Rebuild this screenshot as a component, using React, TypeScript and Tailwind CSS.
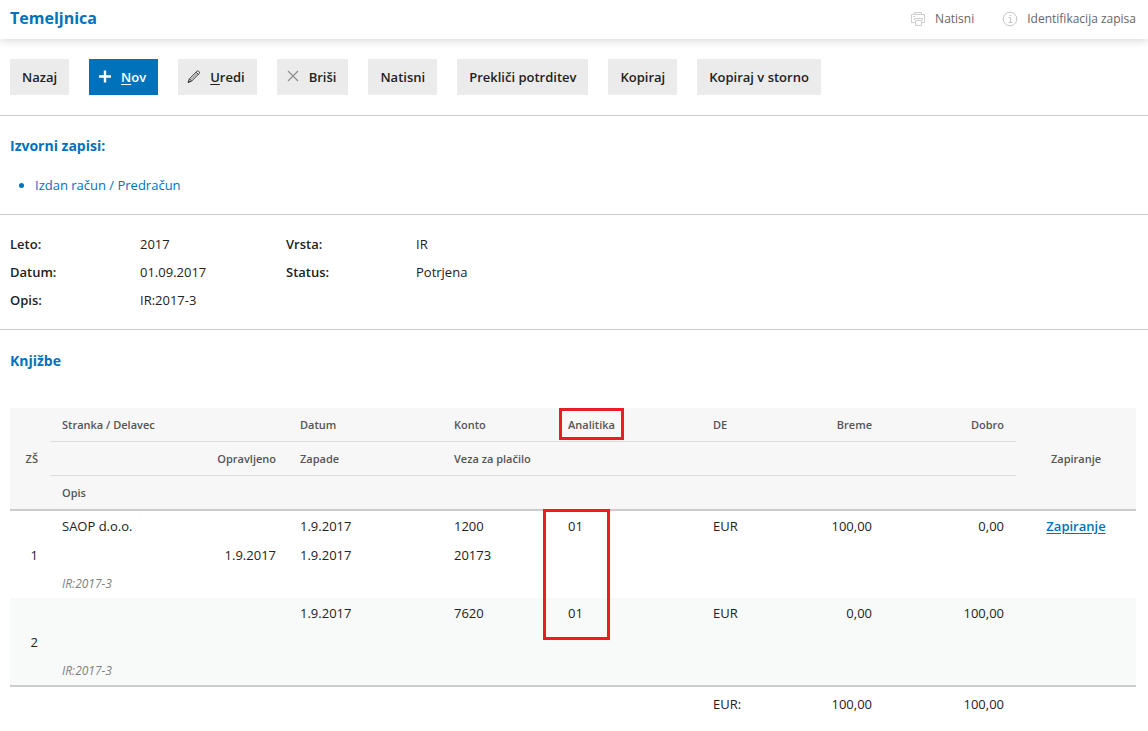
import type { ReactNode } from "react";

interface Entry {
    no: number;
    partner: string;
    date: string;
    account: string;
    analytics: string;
    currency: string;
    debit: string;
    credit: string;
    served: string;
    due: string;
    reference: string;
    note: string;
    closable: boolean;
}

const entries: Entry[] = [
    {
        no: 1, partner: "SAOP d.o.o.", date: "1.9.2017", account: "1200", analytics: "01", currency: "EUR",
        debit: "100,00", credit: "0,00", served: "1.9.2017", due: "1.9.2017", reference: "20173",
        note: "IR:2017-3", closable: true,
    },
    {
        no: 2, partner: "", date: "1.9.2017", account: "7620", analytics: "01", currency: "EUR",
        debit: "0,00", credit: "100,00", served: "", due: "", reference: "",
        note: "IR:2017-3", closable: false,
    },
];

function PrintIcon() {
    return (
        <svg viewBox="0 0 16 16" className="w-4 h-4" fill="none" stroke="#cdcdcd" aria-hidden="true">
            <path d="M4.5 3.5v-2h7v2M4.5 11.5h-3v-8h13v8h-3M3 5.5h2" />
            <path d="M4.5 9V7.5h8V9M5.5 9.5h6v5h-6z" />
        </svg>
    );
}

function InfoIcon() {
    return (
        <svg viewBox="0 0 16 16" className="w-4 h-4" fill="none" stroke="#c4c4c4" aria-hidden="true">
            <circle cx="8" cy="8" r="6.8" />
            <path d="M6.5 6.5h2v5M6.5 11.5h4M7.5 4.5H9" />
        </svg>
    );
}

function PlusIcon() {
    return (
        <svg viewBox="0 0 14 14" className="w-3.5 h-3.5" fill="none" stroke="currentColor" strokeWidth="2.4" aria-hidden="true">
            <path d="M7 0.5v12M1 6.5h12" />
        </svg>
    );
}

function PencilIcon() {
    return (
        <svg viewBox="0 0 14 14" className="w-3.5 h-3.5" fill="none" stroke="#333" aria-hidden="true">
            <path d="M1.2 12.3l1.2-3.5 7.6-7.5c.5-.5 1.2-.5 1.7 0l.5.5c.5.5.5 1.2 0 1.7l-7.6 7.6zM2.4 8.8l2.2 2.3M9 2.2l2.3 2.3" />
            <path d="M3.8 9.7l6-6" strokeWidth="0.6" />
            <path d="M1.2 12.3l.4-1.3.9.9z" fill="#333" />
        </svg>
    );
}

function CrossIcon() {
    return (
        <svg viewBox="0 0 14 14" className="w-3.5 h-3.5" fill="none" stroke="#8c8c8c" strokeWidth="1.1" aria-hidden="true">
            <path d="M2 1l10 10M12 1L2 11" />
        </svg>
    );
}

function ToolButton({ icon, primary, children }: { icon?: ReactNode; primary?: boolean; children: ReactNode }) {
    const color = primary ? "bg-[#0072bc] text-white" : "bg-[#ebebeb] text-[#222]";
    const padding = icon ? "pl-[9px] pr-3" : "px-3";
    return (
        <button type="button" className={`flex items-center gap-[9px] h-9 font-semibold ${padding} ${color}`}>
            {icon}
            <span>{children}</span>
        </button>
    );
}

function Field({ label, value }: { label: string; value: string }) {
    return (
        <div className="flex h-7 items-center">
            <dt className="w-[130px] font-semibold">{label}</dt>
            <dd>{value}</dd>
        </div>
    );
}

export default function App() {
    return (
        <div className="min-h-screen bg-white font-['Open_Sans',sans-serif] text-[13px] leading-5 text-[#222]">
            <header className="flex h-[39px] items-center justify-between pb-0.5 pl-2.5 pr-3 shadow-[0_2px_8px_rgba(0,0,0,0.15)]">
                <h1 className="pb-0.5 text-base font-bold leading-5 text-[#0072bc]">Temeljnica</h1>
                <div className="flex gap-7 text-xs text-[#666]">
                    <button type="button" className="flex items-center gap-[9px]">
                        <PrintIcon />
                        Natisni
                    </button>
                    <button type="button" className="flex items-center gap-[9px]">
                        <InfoIcon />
                        Identifikacija zapisa
                    </button>
                </div>
            </header>

            <div className="flex flex-wrap gap-5 border-b border-[#ccc] px-2.5 py-5">
                <ToolButton>Nazaj</ToolButton>
                <ToolButton primary icon={<PlusIcon />}><u className="underline-offset-2">N</u>ov</ToolButton>
                <ToolButton icon={<PencilIcon />}><u className="underline-offset-2">U</u>redi</ToolButton>
                <ToolButton icon={<CrossIcon />}>Briši</ToolButton>
                <ToolButton>Natisni</ToolButton>
                <ToolButton>Prekliči potrditev</ToolButton>
                <ToolButton>Kopiraj</ToolButton>
                <ToolButton>Kopiraj v storno</ToolButton>
            </div>

            <section className="border-b border-[#ccc] px-2.5 pt-5 pb-[19px] text-[#0072bc]">
                <h2 className="text-sm font-bold">Izvorni zapisi:</h2>
                <ul className="mt-[19px] list-disc pl-[25px]">
                    <li><a href="#racun">Izdan račun / Predračun</a></li>
                </ul>
            </section>

            <dl className="flex border-b border-[#ccc] px-2.5 py-[15px]">
                <div className="w-[276px]">
                    <Field label="Leto:" value="2017" />
                    <Field label="Datum:" value="01.09.2017" />
                    <Field label="Opis:" value="IR:2017-3" />
                </div>
                <div>
                    <Field label="Vrsta:" value="IR" />
                    <Field label="Status:" value="Potrjena" />
                </div>
            </dl>

            <section className="pl-2.5 pr-3 pt-[21px]">
                <h2 className="text-sm font-bold text-[#0072bc]">Knjižbe</h2>
                <table className="mt-[37px] w-full table-fixed border-separate border-spacing-0 text-left">
                    <colgroup>
                        <col className="w-[40px]" />
                        <col className="w-[238px]" />
                        <col className="w-[154px]" />
                        <col className="w-[114px]" />
                        <col className="w-[145px]" />
                        <col className="w-[73px]" />
                        <col className="w-[110px]" />
                        <col className="w-[132px]" />
                        <col className="w-[120px]" />
                    </colgroup>
                    <thead className="bg-[#f7f7f7] text-[11px] text-[#555] [&_th]:px-3 [&_th]:font-semibold">
                        <tr className="h-[34px]">
                            <th rowSpan={3} className="border-b-2 border-[#ccc] text-right">ZŠ</th>
                            <th className="border-b border-[#ddd]">Stranka / Delavec</th>
                            <th className="border-b border-[#ddd]">Datum</th>
                            <th className="border-b border-[#ddd]">Konto</th>
                            <th className="relative border-b border-[#ddd]">
                                Analitika
                                <span className="absolute top-0 left-[3px] h-8 w-[65px] border-3 border-[#ed1c24]" />
                            </th>
                            <th className="border-b border-[#ddd]">DE</th>
                            <th className="border-b border-[#ddd] text-right">Breme</th>
                            <th className="border-b border-[#ddd] text-right">Dobro</th>
                            <th rowSpan={3} className="border-b-2 border-[#ccc] text-center">Zapiranje</th>
                        </tr>
                        <tr className="h-[34px]">
                            <th className="border-b border-[#ddd] text-right">Opravljeno</th>
                            <th className="border-b border-[#ddd]">Zapade</th>
                            <th colSpan={5} className="border-b border-[#ddd]">Veza za plačilo</th>
                        </tr>
                        <tr className="h-[35px]">
                            <th colSpan={7} className="border-b-2 border-[#ccc]">Opis</th>
                        </tr>
                    </thead>
                    {entries.map((e, i) => (
                        <tbody key={e.no} className="even:bg-[#f8faf9] [&_td]:px-3">
                            <tr className="h-[30px]">
                                <td rowSpan={3} className="text-right">{e.no}</td>
                                <td>{e.partner}</td>
                                <td>{e.date}</td>
                                <td>{e.account}</td>
                                <td className="relative">
                                    {e.analytics}
                                    {i === 0 && (
                                        <span className="absolute -top-0.5 -left-[13px] z-10 h-[131px] w-[67px] border-3 border-[#ed1c24]" />
                                    )}
                                </td>
                                <td>{e.currency}</td>
                                <td className="text-right">{e.debit}</td>
                                <td className="text-right">{e.credit}</td>
                                <td className="text-center">
                                    {e.closable && <a href="#zapiranje" className="font-semibold text-[#0072bc] underline underline-offset-2">Zapiranje</a>}
                                </td>
                            </tr>
                            <tr className="h-7">
                                <td className="text-right">{e.served}</td>
                                <td>{e.due}</td>
                                <td colSpan={5}>{e.reference}</td>
                                <td />
                            </tr>
                            <tr className="h-[29px] text-xs text-[#808080] italic">
                                <td colSpan={7}>{e.note}</td>
                                <td />
                            </tr>
                        </tbody>
                    ))}
                    <tfoot className="[&_td]:border-t-2 [&_td]:border-[#ccc] [&_td]:px-3">
                        <tr className="h-9">
                            <td colSpan={5} />
                            <td>EUR:</td>
                            <td className="text-right">100,00</td>
                            <td className="text-right">100,00</td>
                            <td />
                        </tr>
                    </tfoot>
                </table>
            </section>
        </div>
    );
}
